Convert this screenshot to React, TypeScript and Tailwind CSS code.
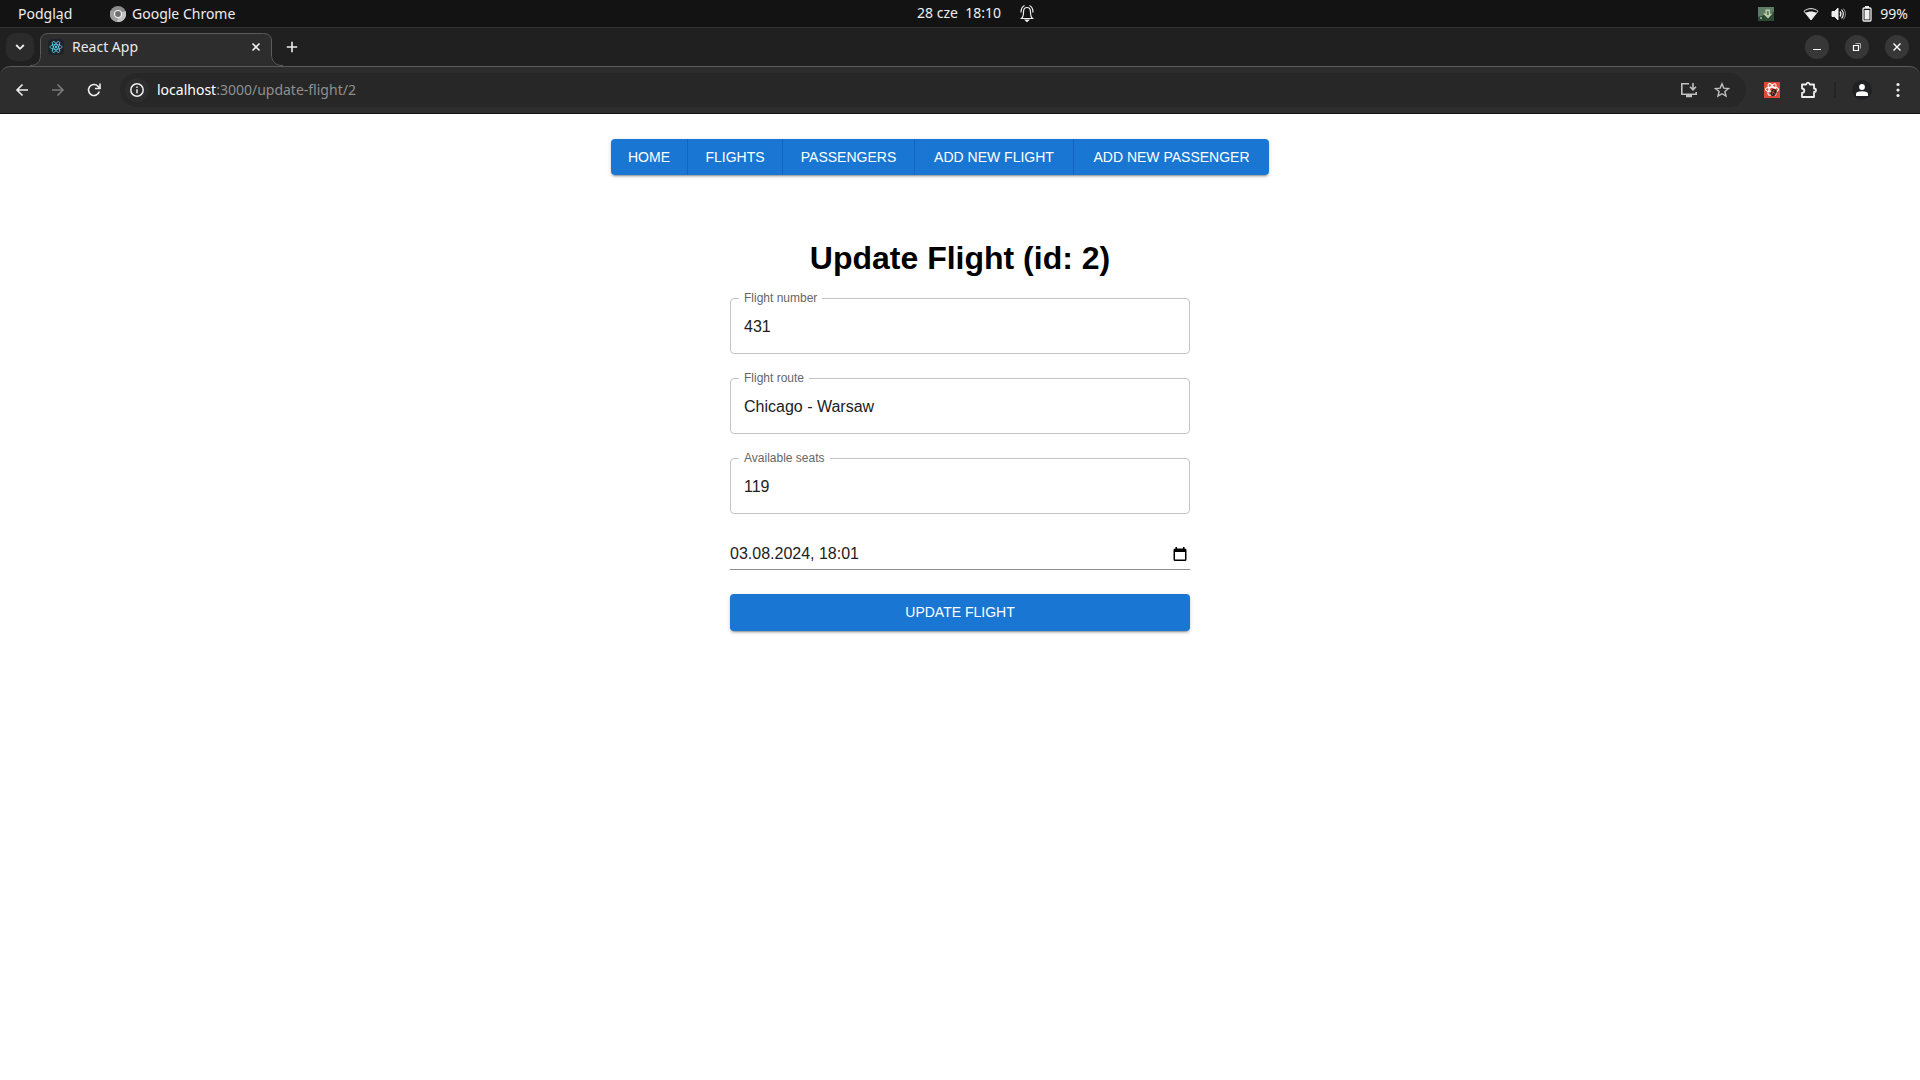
import { useId, useState } from "react";
import type { ReactNode } from "react";

function ReactLogo({ className }: { className: string }) {
  return (
    <svg viewBox="0 0 24 24" className={className} fill="none" stroke="currentColor" strokeWidth="1.5" aria-hidden="true">
      <ellipse cx="12" cy="12" rx="10.5" ry="4" />
      <ellipse cx="12" cy="12" rx="10.5" ry="4" transform="rotate(60 12 12)" />
      <ellipse cx="12" cy="12" rx="10.5" ry="4" transform="rotate(120 12 12)" />
      <circle cx="12" cy="12" r="2" fill="currentColor" stroke="none" />
    </svg>
  );
}

function ChromeLogo() {
  return (
    <svg viewBox="0 0 16 16" className="size-4" aria-hidden="true">
      <circle cx="8" cy="8" r="8" fill="#8c8c8c" />
      <path d="M8 8 15.5 5A8 8 0 0 1 7 16Z" fill="#c4c4c4" />
      <path d="M8 8 7 16A8 8 0 0 1 1 4Z" fill="#9c9c9c" />
      <circle cx="8" cy="8" r="4" fill="#f2f2f2" />
      <circle cx="8" cy="8" r="2.9" fill="#6e6e6e" />
    </svg>
  );
}

function BellIcon() {
  return (
    <svg viewBox="0 0 16 18" className="h-[18px] w-4" fill="none" stroke="#eee" strokeWidth="1.2" aria-hidden="true">
      <path d="M2.5 14.5c2-1.6 2-3.5 2-6.5 0-3 1.3-4.5 3.5-4.5S11.5 5 11.5 8c0 3 0 4.9 2 6.5Z" />
      <path d="M2 8.5C2 5 3.3 2.5 5.5 1.5M14 8.5C14 5 12.7 2.5 10.5 1.5" />
      <path d="M6.5 16h3L8 17.5Z" fill="#eee" />
    </svg>
  );
}

function TopBar() {
  return (
    <header className="grid h-[27px] grid-cols-3 items-center bg-[#131313] text-[14px] leading-5 text-[#eeeeee]">
      <div className="flex items-center pl-[18px]">
        <button type="button" className="w-[92px] text-left">Podgląd</button>
        <button type="button" className="flex items-center gap-1.5">
          <ChromeLogo />
          Google Chrome
        </button>
      </div>
      <div className="flex items-center justify-center gap-[18px] pb-0.5 pl-8">
        <button type="button" className="whitespace-pre">28 cze  18:10</button>
        <button type="button" aria-label="Notifications"><BellIcon /></button>
      </div>
      <div className="flex items-center justify-end pr-3">
        <svg viewBox="0 0 16 14" className="mr-[29px] h-3.5 w-4" aria-hidden="true">
          <rect width="16" height="14" fill="#2c4a33" />
          <path d="M0 0H16V5L0 10Z" fill="#5e7b66" />
          <path d="M7.5 2.5h4.500v4h2.500L10 11.500 5 6.500h2.500Z" fill="#b9cfb0" />
          <path d="M8.800 4h2v4h-2Z" fill="#5d7e55" />
          <path d="M2 10h2v2H2Z" fill="#7fa184" />
        </svg>
        <svg viewBox="0 0 16 14" className="mr-3 h-3.5 w-4" aria-hidden="true">
          <path d="M8 13 1 4.2C5 .8 11 .8 15 4.2Z" fill="none" stroke="#eee" />
          <path d="M8 13 2.500 6c3-2 8-2 11 0Z" fill="#eee" />
        </svg>
        <svg viewBox="0 0 16 14" className="mr-[15px] h-3.5 w-4" fill="none" stroke="#eee" aria-hidden="true">
          <path d="M1 4.5h2.5L7 1v12L3.5 9.5H1Z" fill="#eee" />
          <path d="M9 4.5q1.8 2.5 0 5" strokeWidth="1.3" />
          <path d="M10.500 2.5q3.600 4.500 0 9" strokeWidth="1.200" />
          <path d="M12.500 1.500q4 5.500 0 11" stroke="#888" />
        </svg>
        <svg viewBox="0 0 10 16" className="mr-2 h-4 w-2.5" aria-hidden="true">
          <rect x="1" y="2" width="8" height="13" rx="1" fill="none" stroke="#eee" strokeWidth="1.3" />
          <rect x="3" y="0" width="4" height="2" fill="#eee" />
          <rect x="2.5" y="4" width="5" height="9.5" fill="#eee" />
        </svg>
        <span>99%</span>
      </div>
    </header>
  );
}

function WindowButton({ label, children }: { label: string; children: ReactNode }) {
  return (
    <button type="button" aria-label={label} className="flex size-6 items-center justify-center rounded-full bg-[#373737] text-white">
      <svg viewBox="0 0 12 12" className="size-3" fill="none" stroke="currentColor" aria-hidden="true">{children}</svg>
    </button>
  );
}

function TabStrip() {
  return (
    <div className="flex h-[39px] border-t border-[#323232] bg-[#202020] text-[14px] text-[#e8e8e8]">
      <div className="w-10 pt-[5px]">
        <button type="button" aria-label="Search tabs" className="ml-1.5 flex size-7 items-center justify-center rounded-[10px] bg-[#2b2b2b]">
          <svg viewBox="0 0 10 10" className="size-2.5" fill="none" stroke="#eee" strokeWidth="1.8" aria-hidden="true"><path d="m1.2 3 3.8 3.8L8.8 3" /></svg>
        </button>
      </div>
      <div className="relative flex w-[232px] pt-[5px]">
        <svg viewBox="0 0 272 38" className="absolute left-[-40px] top-0 h-[38px] w-[272px]" fill="none" aria-hidden="true">
          <path d="M30 38c7 0 10.5-4 10.5-10V13q0-7.5 8-7.5h215q8 0 8 7.5v25Z" fill="#2d2d2d" />
          <path d="M30 37.5c7 0 10.5-4 10.5-10V13q0-7.5 8-7.5h215q8 0 8 7.5V28" stroke="#5a5a5a" />
        </svg>
        <div className="relative flex grow items-center gap-2 pb-1.5 pl-2 pr-[11px]">
          <span className="flex size-4 items-center justify-center rounded-sm bg-[#20232a] text-[#58c4dc]"><ReactLogo className="size-3.5" /></span>
          <span className="grow">React App</span>
          <button type="button" aria-label="Close tab">
            <svg viewBox="0 0 10 10" className="size-2.5" stroke="#eee" strokeWidth="1.6" aria-hidden="true"><path d="m1.5 1.5 7 7m0-7-7 7" /></svg>
          </button>
        </div>
      </div>
      <div className="relative flex grow items-center justify-between pl-3.5 pr-[11px]">
        <svg viewBox="0 0 12 12" className="absolute bottom-0 left-[-1px] size-3" fill="none" aria-hidden="true">
          <path d="M0 0c0 7 3 11.5 11 11.5L12 12H0Z" fill="#2d2d2d" />
          <path d="M.5 0c0 7 3 11.5 11.5 11.5" stroke="#5a5a5a" />
        </svg>
        <button type="button" aria-label="New tab">
          <svg viewBox="0 0 12 12" className="size-3" stroke="#eee" strokeWidth="1.6" aria-hidden="true"><path d="M6 .8v10.4M.8 6h10.400" /></svg>
        </button>
        <div className="flex gap-4">
          <WindowButton label="Minimise"><path d="M2 8.5h8" /></WindowButton>
          <WindowButton label="Restore"><path d="M2.5 4.5h5v5h-5Z" strokeWidth="1.2" /><path d="M4.5 2.5h5v5" stroke="#aaa" /></WindowButton>
          <WindowButton label="Close"><path d="m2.5 2.5 7 7m0-7-7 7" strokeWidth="1.4" /></WindowButton>
        </div>
      </div>
    </div>
  );
}

function ToolbarButton({ label, children, className }: { label: string; children: ReactNode; className: string }) {
  return (
    <button type="button" aria-label={label} className={className}>
      <svg viewBox="0 0 16 16" className="size-4" fill="none" stroke="currentColor" strokeWidth="1.6" aria-hidden="true">{children}</svg>
    </button>
  );
}

function AddressBar() {
  return (
    <div className="flex h-12 items-center rounded-t-[10px] border-t border-b border-t-[#5a5a5a] border-b-[#161214] bg-[#2d2d2d] px-3.5 text-[#eeeeee]">
      <ToolbarButton label="Back" className="mr-5"><path d="M14 8H3m5.500-5.500L3 8l5.500 5.500" /></ToolbarButton>
      <ToolbarButton label="Forward" className="mr-5 text-[#7a7a7a]"><path d="M2 8h11M7.500 2.500 13 8l-5.500 5.500" /></ToolbarButton>
      <ToolbarButton label="Reload" className="mr-[18px]"><path d="M13.300 9.500A5.500 5.500 0 1 1 12 4.200L13.500 6" /><path d="M14 1.500v5H9" /></ToolbarButton>
      <div className="flex h-[34px] grow items-center rounded-full bg-[#272727] pl-[5px] pr-4 text-[14px]">
        <button type="button" aria-label="Site information" className="flex size-6 items-center justify-center rounded-full bg-[#2d2d2d]">
          <svg viewBox="0 0 16 16" className="size-4" fill="none" stroke="#eee" strokeWidth="1.5" aria-hidden="true">
            <circle cx="8" cy="8" r="6.2" /><path d="M8 7.200v4M8 4.500V6" />
          </svg>
        </button>
        <a href="#address" className="ml-2 grow whitespace-nowrap pb-0.5 text-[#8f8f8f]"><span className="text-white">localhost</span>:3000/update-flight/2</a>
        <button type="button" aria-label="Install app" className="mr-4 text-[#c0c0c0]">
          <svg viewBox="0 0 18 16" className="h-4 w-[18px]" fill="none" stroke="currentColor" strokeWidth="1.6" aria-hidden="true">
            <path d="M9 1.800H1.800v10.400h14.400V10" /><path d="M13 1v6.500M10 4.800l3 3 3-3" /><path d="M6 14h6" strokeWidth="2.5" />
          </svg>
        </button>
        <ToolbarButton label="Bookmark this tab" className="text-[#c0c0c0]"><path strokeWidth="1.4" d="m8 1.800 1.800 4.300 4.700.4-3.600 3 1.100 4.600L8 11.700l-4 2.400 1.100-4.600-3.600-3 4.700-.4Z" /></ToolbarButton>
      </div>
      <button type="button" aria-label="React developer tools" className="ml-[18px] mr-5">
        <svg viewBox="0 0 16 16" className="size-4" fill="none" stroke="#fff" strokeWidth="1.1" aria-hidden="true">
          <rect width="16" height="16" fill="#dd4a38" stroke="none" />
          <ellipse cx="8" cy="7.5" rx="6.5" ry="2.4" />
          <ellipse cx="8" cy="7.5" rx="6.5" ry="2.4" transform="rotate(60 8 7.5)" />
          <ellipse cx="8" cy="7.5" rx="6.5" ry="2.4" transform="rotate(120 8 7.5)" />
          <ellipse cx="9.5" cy="10.5" rx="2.8" ry="3.8" transform="rotate(30 9.5 10.5)" fill="#222" stroke="none" />
          <path d="m7 9 5 3M10 8l-2 5" stroke="#dd4a38" strokeWidth=".8" />
        </svg>
      </button>
      <button type="button" aria-label="Extensions">
        <svg viewBox="0 0 18 18" className="size-[18px]" fill="none" stroke="#eee" strokeWidth="1.8" strokeLinejoin="round" aria-hidden="true">
          <path d="M2 3.500h4.300q.2-1.800 1.700-1.800t1.700 1.800H14v4q2 .2 2 1.800T14 11v5H2v-4q2.300-.3 2.300-2.300T2 7.500Z" />
        </svg>
      </button>
      <div className="mx-4 h-4 w-0.5 bg-[#242424]" />
      <button type="button" aria-label="Profile" className="mr-[18px] flex size-5 items-center justify-center rounded-full bg-[#202124]">
        <svg viewBox="0 0 12 12" className="size-3" fill="#fff" aria-hidden="true"><circle cx="6" cy="3" r="2.9" /><path d="M0 12V10q0-2.800 6-2.800T12 10v2Z" /></svg>
      </button>
      <button type="button" aria-label="Menu">
        <svg viewBox="0 0 16 16" className="size-4" fill="#eee" aria-hidden="true"><circle cx="8" cy="2.5" r="1.6" /><circle cx="8" cy="8" r="1.6" /><circle cx="8" cy="13.5" r="1.6" /></svg>
      </button>
    </div>
  );
}

const links = [
  { text: "HOME", href: "#home", width: "min-w-[77px]" },
  { text: "FLIGHTS", href: "#flights", width: "min-w-[95px]" },
  { text: "PASSENGERS", href: "#passengers", width: "min-w-[132px]" },
  { text: "ADD NEW FLIGHT", href: "#add-flight", width: "min-w-[159px]" },
  { text: "ADD NEW PASSENGER", href: "#add-passenger", width: "min-w-[195px]" },
];

function OutlinedField({ label, initial }: { label: string; initial: string }) {
  const id = useId();
  const [value, setValue] = useState(initial);
  return (
    <div className="relative mb-6 rounded-[4px] border border-[#c4c4c4]">
      <label htmlFor={id} className="absolute -top-2.5 left-2 bg-white px-[5px] text-[12px] leading-[18px] text-[#666666]">{label}</label>
      <input id={id} value={value} onChange={(e) => setValue(e.target.value)} className="block h-[54px] w-full rounded-[4px] px-[13px] pt-0.5 text-[16px] leading-6 text-[#212121] outline-none" />
    </div>
  );
}

function FlightForm() {
  const [date, setDate] = useState("03.08.2024, 18:01");
  return (
    <form className="mx-auto flex w-full max-w-[460px] flex-col" onSubmit={(e) => e.preventDefault()}>
      <h1 className="mb-[22px] text-center text-[32px] font-bold leading-9 text-black">Update Flight (id: 2)</h1>
      <OutlinedField label="Flight number" initial="431" />
      <OutlinedField label="Flight route" initial="Chicago - Warsaw" />
      <OutlinedField label="Available seats" initial="119" />
      <div className="mb-6 flex h-8 items-center border-b border-[#8c8c8c]">
        <input aria-label="Departure" value={date} onChange={(e) => setDate(e.target.value)} className="h-8 min-w-0 grow text-[16px] text-[#212121] outline-none" />
        <button type="button" aria-label="Open calendar" className="mr-[3px]">
          <svg viewBox="0 0 14 16" className="h-4 w-3.5" aria-hidden="true">
            <path fillRule="evenodd" d="M2.500 1h1.500v1.500h6V1h1.500v1.500H12q1.500 0 1.500 1.500v9.500q0 1.500-1.500 1.500H2q-1.500 0-1.500-1.500V4Q.5 2.500 2 2.500h.5ZM2 6v7.500h10V6Z" />
          </svg>
        </button>
      </div>
      <button type="submit" className="h-[37px] rounded-[4px] bg-[#1976d2] text-[14px] font-medium text-white shadow-[0_3px_1px_-2px_rgba(0,0,0,0.2),0_2px_2px_0_rgba(0,0,0,0.14),0_1px_5px_0_rgba(0,0,0,0.12)]">UPDATE FLIGHT</button>
    </form>
  );
}

export default function App() {
  return (
    <div className="min-h-screen bg-white">
      <div className="bg-[#202020] font-['Noto_Sans',sans-serif]">
        <TopBar />
        <TabStrip />
        <AddressBar />
      </div>
      <main className="pt-[25px] font-['Liberation_Sans',sans-serif]">
        <nav aria-label="Main" className="mb-[65px] flex justify-center pr-10">
          <div className="flex rounded-[4px] shadow-[0_3px_1px_-2px_rgba(0,0,0,0.2),0_2px_2px_0_rgba(0,0,0,0.14),0_1px_5px_0_rgba(0,0,0,0.12)]">
            {links.map((link) => (
              <a key={link.text} href={link.href} className={`${link.width} flex h-9 items-center justify-center border-r border-[#1565c0] bg-[#1976d2] text-[14px] font-medium text-white first:rounded-l-[4px] last:rounded-r-[4px] last:border-r-0`}>{link.text}</a>
            ))}
          </div>
        </nav>
        <FlightForm />
      </main>
    </div>
  );
}
